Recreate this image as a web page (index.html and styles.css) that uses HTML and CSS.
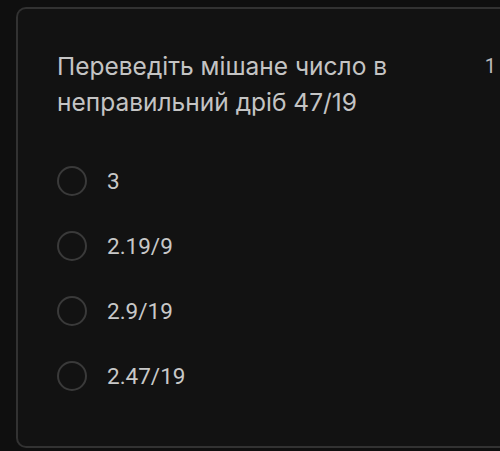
FILE: index.html
```html
<!DOCTYPE html>
<html lang="uk">
<head>
    <meta charset="UTF-8">
    <meta name="viewport" content="width=device-width, initial-scale=1.0">
    <title>Питання</title>
    <link rel="stylesheet" href="styles.css">
</head>
<body>

    <div class="card">
        <div class="question">
            <div class="question-text">Переведіть мішане число в неправильний дріб 47/19</div>
            <div class="points">1</div>
        </div>

        <div class="options">
            <label class="option">
                <span class="radio"></span>
                <span class="option-text">3</span>
            </label>
            <label class="option">
                <span class="radio"></span>
                <span class="option-text">2.19/9</span>
            </label>
            <label class="option">
                <span class="radio"></span>
                <span class="option-text">2.9/19</span>
            </label>
            <label class="option">
                <span class="radio"></span>
                <span class="option-text">2.47/19</span>
            </label>
        </div>
    </div>

</body>
</html>
```

FILE: styles.css
```css
html, body {
    margin: 0;
    height: 100%;
}
body {
    background-color: #0f0f0f;
    overflow: hidden;
    padding: 7px 0 0 16px;
    box-sizing: border-box;
}
.card {
    width: 484px;
    height: 441px;
    box-sizing: border-box;
    background-color: #121212;
    border: 2px solid #323232;
    border-right: none;
    border-radius: 10px 0 0 10px;
    padding: 39px 4px 0 39px;
}
.question {
    display: flex;
    justify-content: space-between;
    align-items: flex-start;
}
.question-text {
    width: 350px;
    font-family: Inter, sans-serif;
    font-size: 24.5px;
    line-height: 36px;
    color: #c4c4c4;
}
.points {
    font-family: Roboto, sans-serif;
    font-size: 20px;
    line-height: 36px;
    color: #bdbdbd;
}
.options {
    margin-top: 46px;
    display: flex;
    flex-direction: column;
    gap: 35px;
}
.option {
    display: flex;
    align-items: center;
    gap: 20px;
}
.radio {
    width: 26px;
    height: 26px;
    border: 2.5px solid #3a3a3a;
    border-radius: 50%;
}
.option-text {
    font-family: Roboto, sans-serif;
    font-size: 22.5px;
    color: #c8c8c8;
}
```
